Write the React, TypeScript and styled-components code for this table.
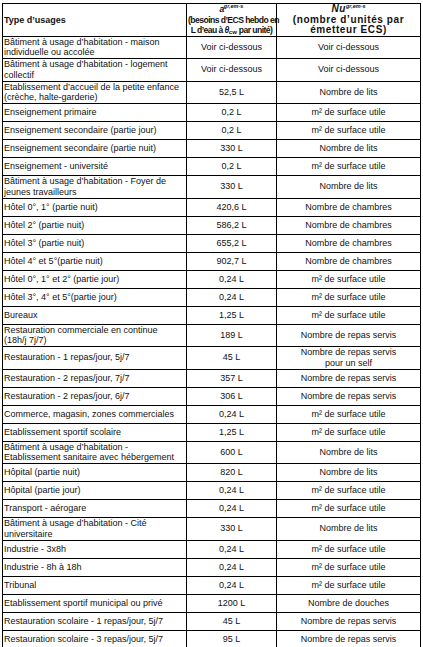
import styled, { createGlobalStyle } from "styled-components";

const GlobalStyle = createGlobalStyle`
  html, body {
    margin: 0;
    padding: 0;
    background: #fff;
  }
  body {
    font-family: "Liberation Sans", Arial, sans-serif;
    color: #111;
  }
`;

type Row = { usage: string; besoin: string; unite: string };

// line breaks follow the source document
const rows: Row[] = [
  { usage: "Bâtiment à usage d’habitation - maison\nindividuelle ou accolée", besoin: "Voir ci-dessous", unite: "Voir ci-dessous" },
  { usage: "Bâtiment à usage d’habitation - logement\ncollectif", besoin: "Voir ci-dessous", unite: "Voir ci-dessous" },
  { usage: "Etablissement d’accueil de la petite enfance\n(crèche, halte-garderie)", besoin: "52,5 L", unite: "Nombre de lits" },
  { usage: "Enseignement primaire", besoin: "0,2 L", unite: "m² de surface utile" },
  { usage: "Enseignement secondaire (partie jour)", besoin: "0,2 L", unite: "m² de surface utile" },
  { usage: "Enseignement secondaire (partie nuit)", besoin: "330 L", unite: "Nombre de lits" },
  { usage: "Enseignement - université", besoin: "0,2 L", unite: "m² de surface utile" },
  { usage: "Bâtiment à usage d’habitation - Foyer de\njeunes travailleurs", besoin: "330 L", unite: "Nombre de lits" },
  { usage: "Hôtel 0°, 1° (partie nuit)", besoin: "420,6 L", unite: "Nombre de chambres" },
  { usage: "Hôtel 2° (partie nuit)", besoin: "586,2 L", unite: "Nombre de chambres" },
  { usage: "Hôtel 3° (partie nuit)", besoin: "655,2 L", unite: "Nombre de chambres" },
  { usage: "Hôtel 4° et 5°(partie nuit)", besoin: "902,7 L", unite: "Nombre de chambres" },
  { usage: "Hôtel 0°, 1° et 2° (partie jour)", besoin: "0,24 L", unite: "m² de surface utile" },
  { usage: "Hôtel 3°, 4° et 5°(partie jour)", besoin: "0,24 L", unite: "m² de surface utile" },
  { usage: "Bureaux", besoin: "1,25 L", unite: "m² de surface utile" },
  { usage: "Restauration commerciale en continue\n(18h/j 7j/7)", besoin: "189 L", unite: "Nombre de repas servis" },
  { usage: "Restauration - 1 repas/jour, 5j/7", besoin: "45 L", unite: "Nombre de repas servis\npour un self" },
  { usage: "Restauration - 2 repas/jour, 7j/7", besoin: "357 L", unite: "Nombre de repas servis" },
  { usage: "Restauration - 2 repas/jour, 6j/7", besoin: "306 L", unite: "Nombre de repas servis" },
  { usage: "Commerce, magasin, zones commerciales", besoin: "0,24 L", unite: "m² de surface utile" },
  { usage: "Etablissement sportif scolaire", besoin: "1,25 L", unite: "m² de surface utile" },
  { usage: "Bâtiment à usage d’habitation -\nEtablissement sanitaire avec hébergement", besoin: "600 L", unite: "Nombre de lits" },
  { usage: "Hôpital (partie nuit)", besoin: "820 L", unite: "Nombre de lits" },
  { usage: "Hôpital (partie jour)", besoin: "0,24 L", unite: "m² de surface utile" },
  { usage: "Transport - aérogare", besoin: "0,24 L", unite: "m² de surface utile" },
  { usage: "Bâtiment à usage d’habitation  - Cité\nuniversitaire", besoin: "330 L", unite: "Nombre de lits" },
  { usage: "Industrie - 3x8h", besoin: "0,24 L", unite: "m² de surface utile" },
  { usage: "Industrie - 8h à 18h", besoin: "0,24 L", unite: "m² de surface utile" },
  { usage: "Tribunal", besoin: "0,24 L", unite: "m² de surface utile" },
  { usage: "Etablissement sportif municipal ou privé", besoin: "1200 L", unite: "Nombre de douches" },
  { usage: "Restauration scolaire - 1 repas/jour, 5j/7", besoin: "45 L", unite: "Nombre de repas servis" },
  { usage: "Restauration scolaire - 3 repas/jour, 5j/7", besoin: "95 L", unite: "Nombre de repas servis" },
];

export default function App() {
  return (
    <>
      <GlobalStyle />
      <Table>
        <colgroup>
          <col style={{ width: 184 }} />
          <col style={{ width: 90 }} />
          <col style={{ width: 144 }} />
        </colgroup>
        <thead>
          <tr>
            <HeadCell $align="left">Type d’usages</HeadCell>
            <HeadCell $align="center" $tight>
              <Symbol>a</Symbol>
              <Sup>gr,em-s</Sup>
              <br />
              (besoins d’ECS hebdo en
              <br />
              L d’eau à <Symbol>θ</Symbol>
              <Sub>cw</Sub> par unité)
            </HeadCell>
            <HeadCell $align="center" $wide>
              <Symbol>Nu</Symbol>
              <Sup>gr,em-s</Sup>
              <br />
              (nombre d’unités par
              <br />
              émetteur ECS)
            </HeadCell>
          </tr>
        </thead>
        <tbody>
          {rows.map((r) => (
            <BodyRow key={r.usage}>
              <Cell $align="left">{r.usage}</Cell>
              <Cell $align="center">{r.besoin}</Cell>
              <Cell $align="center">{r.unite}</Cell>
            </BodyRow>
          ))}
        </tbody>
      </Table>
    </>
  );
}

const Table = styled.table`
  margin: 3px 0 0 2px;
  width: 418px;
  table-layout: fixed;
  border-collapse: collapse;
  font-size: 9px;
  line-height: 10.75px;
`;

const HeadCell = styled.th<{ $align: "left" | "center"; $tight?: boolean; $wide?: boolean }>`
  border: 1px solid #000;
  padding: 0 1px;
  height: 31px;
  line-height: 10.5px;
  white-space: nowrap;
  text-align: ${(p) => p.$align};
  vertical-align: middle;
  font-weight: bold;
  font-size: ${(p) => (p.$tight ? "8.6px" : p.$wide ? "10px" : "9px")};
  letter-spacing: ${(p) => (p.$tight ? "-0.55px" : p.$wide ? "0.6px" : "0")};
`;

const Symbol = styled.i`
  font-weight: bold;
  font-style: italic;
`;

const Sup = styled.sup`
  font-size: 5.5px;
  font-style: italic;
  letter-spacing: 0;
  vertical-align: 4px;
  line-height: 0;
`;

const Sub = styled.sub`
  font-size: 6px;
  letter-spacing: 0;
  vertical-align: -1px;
  line-height: 0;
`;

const BodyRow = styled.tr`
  height: 18px;
`;

const Cell = styled.td<{ $align: "left" | "center" }>`
  border: 1px solid #000;
  padding: 0 1px;
  white-space: pre-line;
  text-align: ${(p) => p.$align};
  vertical-align: middle;
`;
